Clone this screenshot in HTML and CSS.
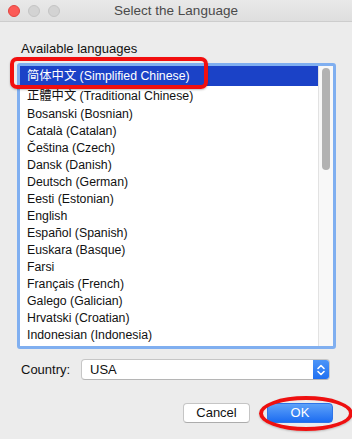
FILE: index.html
```html
<!DOCTYPE html>
<html>
<head>
<meta charset="utf-8">
<link rel="stylesheet" href="styles.css">
</head>
<body>
<div class="window">
  <div class="titlebar">
    <div class="lights">
      <span class="light red"></span>
      <span class="light grey"></span>
      <span class="light grey"></span>
    </div>
    <div class="title">Select the Language</div>
    <div></div>
  </div>
  <div class="content">
    <div class="label">Available languages</div>
    <div class="listbox">
      <div class="rows">
        <div class="row tall selected">简体中文 (Simplified Chinese)</div>
        <div class="row tall">正體中文 (Traditional Chinese)</div>
        <div class="row">Bosanski (Bosnian)</div>
        <div class="row">Català (Catalan)</div>
        <div class="row">Čeština (Czech)</div>
        <div class="row">Dansk (Danish)</div>
        <div class="row">Deutsch (German)</div>
        <div class="row">Eesti (Estonian)</div>
        <div class="row">English</div>
        <div class="row">Español (Spanish)</div>
        <div class="row">Euskara (Basque)</div>
        <div class="row">Farsi</div>
        <div class="row">Français (French)</div>
        <div class="row">Galego (Galician)</div>
        <div class="row">Hrvatski (Croatian)</div>
        <div class="row">Indonesian (Indonesia)</div>
      </div>
      <div class="scrollbar"><div class="thumb"></div></div>
    </div>
    <div class="country-row">
      <span class="country-label">Country:</span>
      <div class="select">
        <span class="select-value">USA</span>
        <span class="stepper">
          <svg width="16" height="20" viewBox="0 0 16 20"><path d="M5 8.5 L8 5.5 L11 8.5 M5 11.5 L8 14.5 L11 11.5" fill="none" stroke="#fff" stroke-width="1.6" stroke-linecap="round" stroke-linejoin="round"/></svg>
        </span>
      </div>
    </div>
    <div class="buttons">
      <button class="btn">Cancel</button>
      <button class="btn primary">OK</button>
    </div>
  </div>
  <div class="mark-rect"></div>
  <div class="mark-ellipse"></div>
</div>
</body>
</html>
```

FILE: styles.css
```css
* { box-sizing: border-box; }
html, body { margin: 0; padding: 0; }
body {
  background: #ececec;
  font-family: "Liberation Sans", Arial, "Noto Sans CJK SC", sans-serif;
  color: #111;
}
.window {
  position: relative;
  width: 352px;
  height: 439px;
  overflow: hidden;
  background: #ececec;
}
.titlebar {
  height: 22px;
  display: grid;
  grid-template-columns: 1fr auto 1fr;
  align-items: center;
  background: linear-gradient(#e9e9e9, #dedede);
  border-bottom: 1px solid #cdcdcd;
}
.lights {
  display: flex;
  gap: 8px;
  padding-left: 8px;
}
.light {
  width: 12px;
  height: 12px;
  border-radius: 50%;
}
.light.red { background: #fc5b57; border: 1px solid #e2443f; }
.light.grey { background: #d3d3d3; border: 1px solid #c4c4c4; }
.title {
  font-size: 13.5px;
  color: #4a4a4a;
  line-height: 16px;
}
.content {
  padding-left: 17px;
}
.label {
  margin-top: 19px;
  font-size: 13px;
  line-height: 16px;
  padding-left: 4px;
  color: #111;
}
.listbox {
  margin-top: 6px;
  width: 319px;
  height: 286px;
  border: 3px solid #80aff0;
  border-radius: 3px;
  background: #fff;
  display: flex;
  overflow: hidden;
}
.rows {
  flex: 1;
  overflow: hidden;
}
.row {
  height: 17px;
  line-height: 17px;
  font-size: 12.3px;
  padding-left: 7px;
  white-space: nowrap;
  color: #111;
}
.row.tall {
  height: 20px;
  line-height: 20px;
}
.row.selected {
  background: #1b42c7;
  color: #fff;
}
.scrollbar {
  width: 15px;
  background: #f8f8f8;
  border-left: 1px solid #e2e2e2;
  padding: 2px 0 0 3px;
}
.thumb {
  width: 8px;
  height: 102px;
  border-radius: 4px;
  background: #b2b2b2;
}
.country-row {
  margin-top: 10px;
  display: flex;
  align-items: center;
  height: 21px;
}
.country-label {
  font-size: 13px;
  padding-left: 4px;
  width: 64px;
  color: #111;
}
.select {
  width: 249px;
  height: 21px;
  display: flex;
  align-items: center;
  justify-content: space-between;
  background: #fff;
  border: 1px solid #c6c6c6;
  border-bottom-color: #b5b5b5;
  border-radius: 4px;
  overflow: hidden;
}
.select-value {
  font-size: 13px;
  padding-left: 8px;
  color: #111;
}
.stepper {
  width: 16px;
  height: 21px;
  display: flex;
  align-items: center;
  justify-content: center;
  background: linear-gradient(#4f97f8, #1d6ef1);
}
.buttons {
  margin-top: 23px;
  display: flex;
  justify-content: flex-end;
  gap: 17px;
  padding-right: 19px;
}
.btn {
  height: 20px;
  margin: 0;
  padding: 0;
  font-family: "Liberation Sans", Arial, sans-serif;
  font-size: 13px;
  line-height: 18px;
  border-radius: 4px;
}
.btn:not(.primary) {
  width: 67px;
  background: #fff;
  color: #111;
  border: 1px solid #c5c5c5;
  border-bottom-color: #acacac;
}
.btn.primary {
  width: 66px;
  color: #fff;
  background: linear-gradient(#5ea2f9, #1c6cf1);
  border: 1px solid #2d74e8;
}
.mark-rect {
  position: absolute;
  left: 10px;
  top: 57px;
  width: 198px;
  height: 32px;
  border: 4px solid #f20f0f;
  border-radius: 7px;
  box-shadow: 0 1px 2px rgba(0,0,0,0.25);
}
.mark-ellipse {
  position: absolute;
  left: 259px;
  top: 396px;
  width: 94px;
  height: 35px;
  border: 4px solid #ee1010;
  border-radius: 50%;
  box-shadow: 0 1px 2px rgba(0,0,0,0.2);
}
```
